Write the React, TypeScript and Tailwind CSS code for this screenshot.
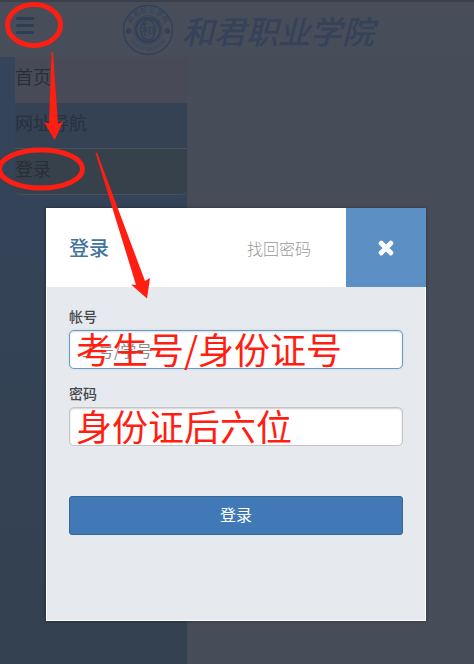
import { FaTimes } from 'react-icons/fa';

const NAV_ITEMS = [
  { label: '首页', className: 'border-[#474b57] bg-[#484b57] text-[#282e39]' },
  { label: '网址导航', className: 'border-[#465261] bg-[#354254] text-[#27313f]' },
  { label: '登录', className: 'rounded-b-md border-[#465261] bg-[#37414b] text-[#272f38]' },
];

function Seal() {
  return (
    <svg viewBox="0 0 52 52" className="size-[52px] shrink-0" fill="none" stroke="#334158" aria-hidden="true">
      <circle cx="26" cy="26" r="24.5" strokeWidth="1.5" />
      <circle cx="26" cy="26" r="14.5" strokeWidth="0.8" />
      <circle cx="26" cy="26" r="12" strokeWidth="2.5" />
      <ellipse cx="26" cy="26" rx="7.5" ry="10" fill="#444c5a" strokeWidth="1.5" />
      <circle cx="6.5" cy="27" r="2.5" fill="#334158" />
      <circle cx="45.5" cy="27" r="2.5" fill="#334158" />
      <path d="M25 19l-4 1.5M23 20v12M20 24h6M23 24l-3 5M23 25l2.5 3M27.500 23.500h4v6h-4z" strokeWidth="1.2" />
      <path id="seal-top" d="M9 22a17.500 17.500 0 0 1 34 0" stroke="none" />
      <path id="seal-bottom" d="M6 32a21 21 0 0 0 40 0" stroke="none" />
      <g fill="#334158" stroke="none">
        <text fontSize="7" textAnchor="middle">
          <textPath href="#seal-top" startOffset="50%">和君职业学院</textPath>
        </text>
        <text fontSize="5" textAnchor="middle">
          <textPath href="#seal-bottom" startOffset="50%">HEJUN VOCATION</textPath>
        </text>
      </g>
    </svg>
  );
}

function Header() {
  return (
    <header className="flex h-[57px] items-center border-t-2 border-[#3b404a] bg-[#474e5a] pl-4">
      <button type="button" aria-label="菜单" className="flex w-[18px] flex-col gap-1 pb-2">
        <span className="h-[3px] rounded-sm bg-[#2c3d55]" />
        <span className="h-[3px] rounded-sm bg-[#2c3d55]" />
        <span className="h-[3px] rounded-sm bg-[#2c3d55]" />
      </button>
      <div className="ml-[88px] flex items-center gap-2">
        <Seal />
        <span className="text-[32px] leading-10 font-medium whitespace-nowrap text-[#354259] italic">
          和君职业学院
        </span>
      </div>
    </header>
  );
}

function Sidebar() {
  return (
    <nav className="w-[187px] shrink-0 bg-linear-to-b from-[#34445a] to-[#344150] pl-[15px]">
      {NAV_ITEMS.map((item) => (
        <a
          key={item.label}
          href="#"
          className={`flex h-[46px] items-center border-b pb-2 text-lg ${item.className}`}
        >
          {item.label}
        </a>
      ))}
    </nav>
  );
}

function LoginDialog() {
  return (
    <div
      role="dialog"
      aria-labelledby="login-title"
      className="flex h-[413px] flex-col border border-white bg-[#e6e9ed] shadow-[0_0_3px_rgba(0,0,0,0.4)]"
    >
      <div className="flex h-[78px] items-center bg-white pl-[22px]">
        <h1 id="login-title" className="flex-1 text-xl font-medium text-[#41749f]">
          登录
        </h1>
        <a href="#" className="mr-[35px] text-base font-light text-[#999]">
          找回密码
        </a>
        <button
          type="button"
          aria-label="关闭"
          className="-mt-px -mr-px flex w-20 items-center justify-center self-stretch bg-[#5c8fc3] text-white"
        >
          <FaTimes className="size-5 stroke-current stroke-[30]" />
        </button>
      </div>

      <form className="flex flex-col px-[22px] pt-[17px]">
        <label htmlFor="account" className="text-sm leading-6 font-medium text-[#44474b]">
          帐号
        </label>
        <div className="relative mt-0.5">
          <input
            id="account"
            type="text"
            placeholder="工号/学号"
            className="block h-[39px] w-full rounded-[5px] border border-[#6c9bc2] bg-white px-3 text-base shadow-[inset_0_1px_2px_rgba(0,0,0,0.15),0_0_2px_#b4d0e8] outline-none placeholder:text-[#8b8b8b]"
          />
          <Note text="考生号/身份证号" />
        </div>

        <label htmlFor="password" className="mt-3 text-sm leading-6 font-medium text-[#44474b]">
          密码
        </label>
        <div className="relative mt-0.5">
          <input
            id="password"
            type="password"
            className="block h-[39px] w-full rounded-[5px] border border-[#c2c4c6] bg-white px-3 text-base shadow-[inset_0_1px_2px_rgba(0,0,0,0.2)] outline-none"
          />
          <Note text="身份证后六位" />
        </div>

        <button
          type="submit"
          className="mt-[50px] h-[39px] rounded-[3px] border border-[#35679b] bg-[#4179b6] pb-1 text-base text-white"
        >
          登录
        </button>
      </form>
    </div>
  );
}

/** Large red hint laid over a field. */
function Note({ text }: { text: string }) {
  return (
    <span className="pointer-events-none absolute top-0 left-[7px] text-4xl leading-none whitespace-nowrap text-[#ff1e12]">
      {text}
    </span>
  );
}

function Markers() {
  return (
    <svg
      className="pointer-events-none absolute top-0 left-0 z-10"
      width="200"
      height="310"
      fill="none"
      aria-hidden="true"
    >
      <g stroke="#ff1e12" strokeWidth="5">
        <ellipse cx="34" cy="25" rx="26.5" ry="20.5" />
        <ellipse cx="41" cy="169" rx="41.5" ry="19" />
      </g>
      <g fill="#ff1e12">
        <path d="M51.500 52h1.500l5 72 5.500-3-9 19-10.500-18 5 1.500z" />
        <path d="M95.500 153l1.500-.5L145 281l5-3-3 20.500-16-14 5 .5z" />
      </g>
    </svg>
  );
}

export default function App() {
  return (
    <div className="relative flex min-h-screen flex-col bg-[#474d58] font-['Noto_Sans_CJK_SC',sans-serif]">
      <Header />
      <div className="flex flex-1">
        <Sidebar />
      </div>
      <div className="absolute inset-x-0 top-[208px] pr-12 pl-[46px]">
        <LoginDialog />
      </div>
      <Markers />
    </div>
  );
}
